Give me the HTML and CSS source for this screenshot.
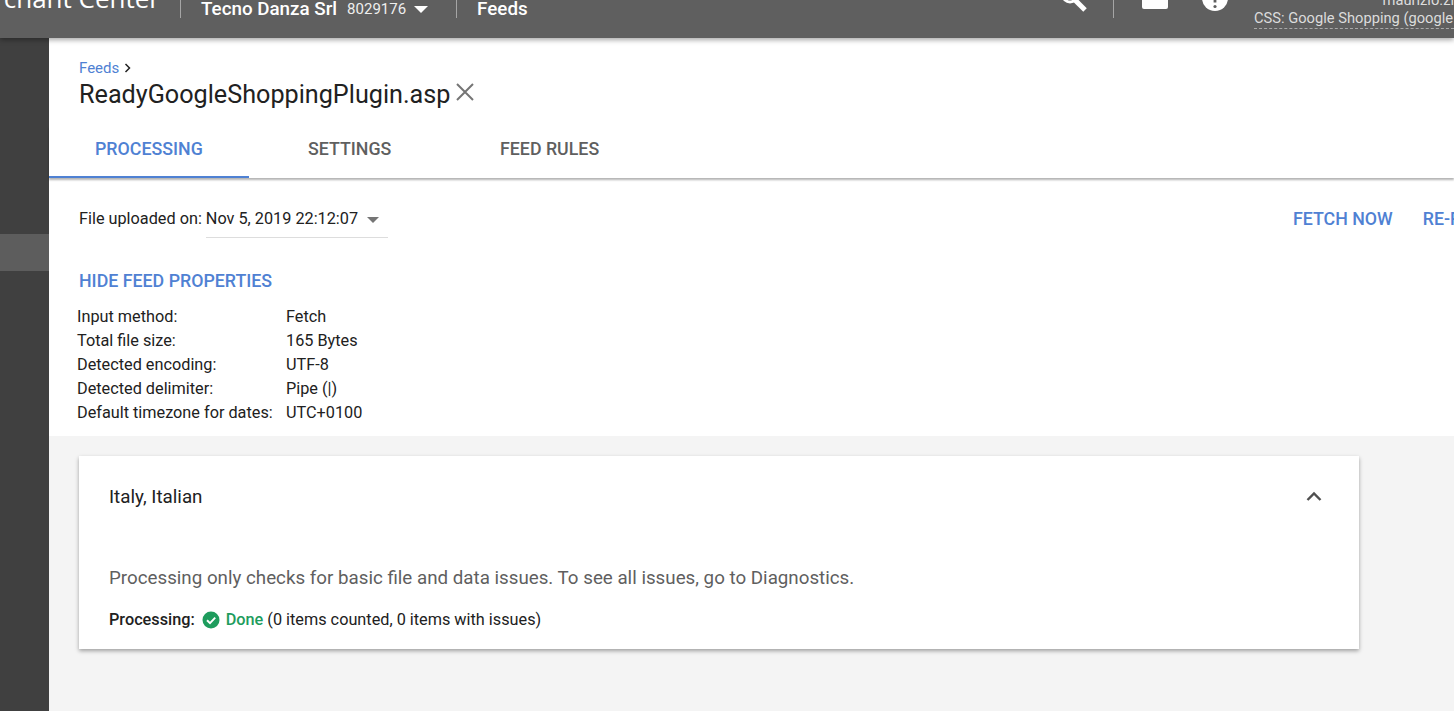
FILE: index.html
```html
<!DOCTYPE html>
<html lang="en">
<head>
  <meta charset="UTF-8">
  <title>Feeds - Merchant Center</title>
  <link rel="stylesheet" href="styles.css">
</head>
<body>

<header class="topbar">
  <div class="brand">Merchant Center</div>
  <div class="top-divider"></div>
  <div class="account">
    <span class="account-name">Tecno Danza Srl</span>
    <span class="account-id">8029176</span>
    <span class="caret-white"></span>
  </div>
  <div class="top-divider"></div>
  <div class="page-name">Feeds</div>
  <div class="top-right">
    <svg class="icon-search" width="32" height="14" viewBox="0 0 32 14">
      <path d="M10 -2 L22 10" stroke="#fff" stroke-width="5" fill="none"/>
      <circle cx="7" cy="-5" r="7" fill="none" stroke="#fff" stroke-width="3"/>
    </svg>
    <div class="top-divider"></div>
    <svg class="icon-mail" width="26" height="9" viewBox="0 0 26 9">
      <path d="M0 0 H26 V7 Q26 9 24 9 H2 Q0 9 0 7 Z" fill="#fff"/>
    </svg>
    <svg class="icon-help" width="26" height="12" viewBox="0 0 26 12">
      <circle cx="13" cy="-2" r="13" fill="#fff"/>
      <circle cx="13" cy="6.500" r="1.600" fill="#5f5f5f"/>
      <rect x="11.600" y="0" width="2.800" height="2.500" fill="#5f5f5f"/>
    </svg>
    <div class="user">
      <div class="user-mail">maurizio.zi</div>
      <div class="user-css">CSS: Google Shopping (google</div>
    </div>
  </div>
</header>

<div class="page">
  <nav class="sidenav">
    <div class="side-active"></div>
  </nav>

  <main class="content">
    <section class="top-panel">
      <div class="title-block">
        <div class="crumb">
          <a class="link">Feeds</a>
          <svg width="7" height="10" viewBox="0 0 7 10">
            <path d="M1.500 1 L5.500 5 L1.500 9" stroke="#212121" stroke-width="1.500" fill="none"/>
          </svg>
        </div>
        <div class="title-row">
          <h1>ReadyGoogleShoppingPlugin.asp</h1>
          <svg class="title-close" width="20" height="20" viewBox="0 0 20 20">
            <path d="M2 2 L18 18 M18 2 L2 18" stroke="#757575" stroke-width="2" fill="none"/>
          </svg>
        </div>
      </div>

      <div class="tabs">
        <div class="tab tab-active">PROCESSING</div>
        <div class="tab">SETTINGS</div>
        <div class="tab">FEED RULES</div>
      </div>

      <div class="file-row">
        <span class="file-label">File uploaded on:</span>
        <div class="file-select">
          <span>Nov 5, 2019 22:12:07</span>
          <span class="caret-grey"></span>
        </div>
        <div class="file-actions">
          <a class="action">FETCH NOW</a>
          <a class="action">RE-PROCESS</a>
        </div>
      </div>

      <a class="hide-props">HIDE FEED PROPERTIES</a>

      <dl class="props">
        <dt>Input method:</dt><dd>Fetch</dd>
        <dt>Total file size:</dt><dd>165 Bytes</dd>
        <dt>Detected encoding:</dt><dd>UTF-8</dd>
        <dt>Detected delimiter:</dt><dd>Pipe (|)</dd>
        <dt>Default timezone for dates:</dt><dd>UTC+0100</dd>
      </dl>
    </section>

    <section class="lower">
      <div class="card">
        <div class="card-head">
          <span>Italy, Italian</span>
          <svg width="18" height="12" viewBox="0 0 18 12">
            <path d="M2.500 10 L9 3.500 L15.500 10" stroke="#4f4f4f" stroke-width="2.400" fill="none"/>
          </svg>
        </div>
        <p class="card-note">Processing only checks for basic file and data issues. To see all issues, go to Diagnostics.</p>
        <div class="status">
          <b>Processing:</b>
          <svg width="18" height="18" viewBox="0 0 18 18">
            <circle cx="9" cy="9" r="8.500" fill="#1e9c5d"/>
            <path d="M5 9.300 L8 12.200 L13.200 6.600" stroke="#fff" stroke-width="1.900" fill="none"/>
          </svg>
          <span><span class="done">Done</span> (0 items counted, 0 items with issues)</span>
        </div>
      </div>
    </section>
  </main>
</div>

</body>
</html>
```

FILE: styles.css
```css
* {
  box-sizing: border-box;
}
html, body {
  margin: 0;
  height: 100%;
  overflow: hidden;
}
body {
  font-family: Roboto, "Liberation Sans", sans-serif;
  font-size: 16.25px;
  color: #212121;
  background-color: #f4f4f4;
}
.topbar {
  display: flex;
  align-items: flex-start;
  height: 38px;
  background-color: #5f5f5f;
  color: white;
  overflow: hidden;
  position: relative;
  z-index: 2;
  box-shadow: 0px 2px 5px rgba(0,0,0,0.35);
}
.brand {
  width: 240px;
  margin-left: -60px;
  margin-top: -17px;
  padding-right: 20px;
  font-family: "Open Sans", sans-serif;
  font-size: 26px;
  line-height: 30px;
  text-align: right;
  white-space: nowrap;
  flex: none;
}
.top-divider {
  width: 1px;
  height: 18px;
  background-color: #a5a5a5;
  flex: none;
}
.account {
  display: flex;
  align-items: center;
  height: 18px;
  margin-left: 20px;
  margin-right: 28px;
}
.account-name {
  font-size: 18.8px;
  font-weight: 500;
}
.account-id {
  font-size: 15px;
  margin-left: 10px;
  color: #eeeeee;
}
.caret-white {
  width: 0;
  height: 0;
  margin-left: 8px;
  border-left: 7px solid transparent;
  border-right: 7px solid transparent;
  border-top: 7px solid white;
}
.page-name {
  margin-left: 20px;
  font-size: 18.8px;
  font-weight: 500;
  line-height: 18px;
}
.top-right {
  display: flex;
  align-items: flex-start;
  margin-left: auto;
  width: 391px;
  flex: none;
}
.icon-search {
  margin-right: 18px;
}
.icon-mail {
  margin-left: 28px;
}
.icon-help {
  margin-left: 34px;
}
.user {
  margin-left: 26px;
  white-space: nowrap;
  overflow: hidden;
  flex: 1;
}
.user-mail {
  margin-top: -8px;
  height: 17px;
  line-height: 17px;
  font-size: 14.7px;
  color: #dddddd;
  text-align: right;
}
.user-css {
  font-size: 14.7px;
  line-height: 19px;
  color: #dcdcdc;
  border-bottom: 1px dashed #a8a8a8;
  height: 20px;
}
.page {
  display: flex;
  height: 673px;
}
.sidenav {
  width: 49px;
  background-color: #404040;
  padding-top: 196px;
  flex: none;
}
.side-active {
  height: 37px;
  background-color: #5d5d5d;
}
.content {
  flex: 1;
  min-width: 0;
}
.top-panel {
  background: white;
  height: 398px;
}
.title-block {
  padding: 21px 0 0 30px;
  height: 88px;
}
.crumb {
  display: flex;
  align-items: center;
  gap: 5px;
  font-size: 15px;
  line-height: 18px;
}
.link {
  color: #4f81d3;
}
.title-row {
  display: flex;
  align-items: flex-start;
  gap: 5px;
  margin-top: 3px;
}
.title-close {
  margin-top: 2px;
}
h1 {
  margin: 0;
  font-size: 25.2px;
  font-weight: 400;
  line-height: 30px;
  color: #212121;
}
.tabs {
  display: flex;
  height: 52px;
  box-shadow: 0px 2px 2px rgba(0,0,0,0.3);
  font-size: 17.8px;
}
.tab {
  width: 200px;
  padding: 13px 0 0 46px;
  font-weight: 500;
  color: #5f5f5f;
  line-height: 20px;
}
.tab + .tab {
  width: 192px;
  padding-left: 59px;
}
.tab-active {
  color: #4f81d3;
  border-bottom: 2px solid #4f81d3;
}
.file-row {
  display: flex;
  padding-left: 30px;
  height: 60px;
  padding-top: 31px;
  line-height: 20px;
}
.file-label {
  margin-right: 4px;
}
.file-select {
  display: flex;
  width: 182px;
  height: 29px;
  border-bottom: 1px solid #dddddd;
  color: #212121;
}
.caret-grey {
  width: 0;
  height: 0;
  margin: 8px 0 0 9px;
  border-left: 6.500px solid transparent;
  border-right: 6.500px solid transparent;
  border-top: 6px solid #757575;
}
.file-actions {
  display: flex;
  gap: 30px;
  margin-left: auto;
  width: 161px;
  white-space: nowrap;
  font-size: 17.8px;
  font-weight: 500;
  color: #4f81d3;
  flex: none;
  overflow: hidden;
}
.hide-props {
  display: block;
  margin: 32px 0 0 30px;
  font-size: 17.8px;
  font-weight: 500;
  line-height: 22px;
  color: #4f81d3;
}
.props {
  display: grid;
  grid-template-columns: 209px auto;
  justify-content: start;
  margin: 13px 0 0 28px;
  line-height: 24px;
  color: #212121;
}
.props dd {
  margin: 0;
}
.lower {
  padding: 20px 0 0 30px;
}
.card {
  width: 1280px;
  height: 193px;
  background: white;
  padding: 0 30px;
  box-shadow: 0px 2px 4px rgba(0,0,0,0.35);
}
.card-head {
  display: flex;
  align-items: center;
  justify-content: space-between;
  height: 81px;
  padding-right: 6px;
  font-size: 18.8px;
}
.card-head svg {
  margin-bottom: 2px;
}
.card-note {
  margin: 0;
  padding-top: 31px;
  font-size: 18.75px;
  line-height: 20px;
  color: #5f5f5f;
}
.status {
  display: flex;
  align-items: center;
  gap: 7px;
  margin-top: 22px;
  line-height: 20px;
}
.status svg {
  margin-right: -1px;
}
.status b {
  font-weight: 500;
}
.done {
  color: #1e9c5d;
  font-weight: 500;
}
```
